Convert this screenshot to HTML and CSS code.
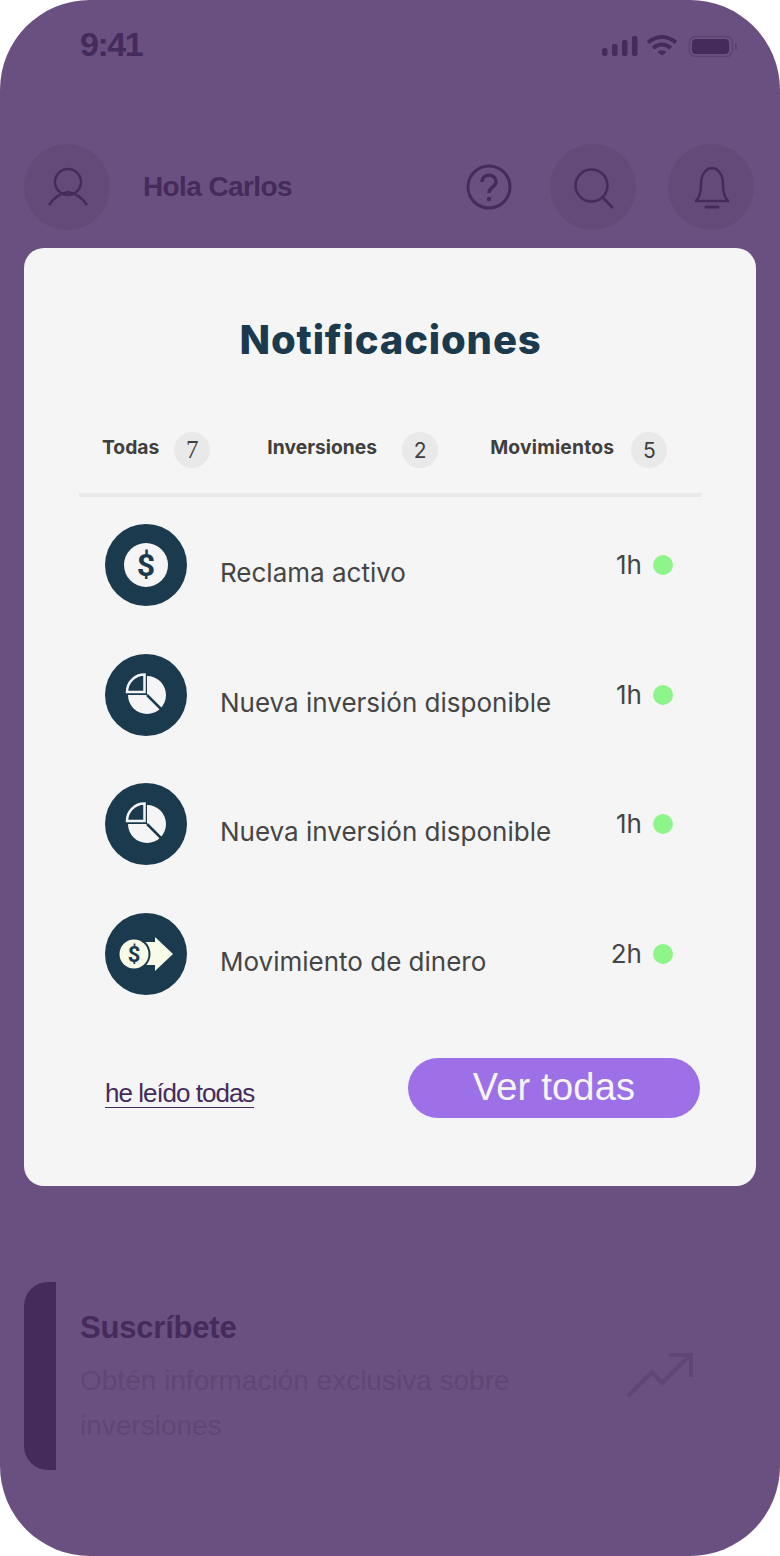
FILE: index.html
```html
<!DOCTYPE html>
<html lang="en">
<head>
    <meta charset="UTF-8">
    <meta name="viewport" content="width=device-width, initial-scale=1.0">
    <title>Notificaciones</title>
    <link rel="stylesheet" href="styles.css">
</head>
<body>
    <div class="phone">
        <div class="status-bar">
            <span class="clock">9:41</span>
            <div class="status-icons">
                <svg width="136" height="24" viewBox="0 0 136 24">
                    <rect x="0" y="15" width="5.5" height="8" rx="2.5" fill="#452a5c"/>
                    <rect x="10" y="11" width="5.5" height="12" rx="2" fill="#452a5c"/>
                    <rect x="20" y="7" width="5.5" height="16" rx="2" fill="#452a5c"/>
                    <rect x="30" y="3" width="5.5" height="20" rx="2" fill="#452a5c"/>
                    <path d="M46 9.5 Q60 -1.5 74 9.5" fill="none" stroke="#452a5c" stroke-width="4"/>
                    <path d="M51 15 Q60 8 69 15" fill="none" stroke="#452a5c" stroke-width="4"/>
                    <path d="M55.5 19 Q60 15.5 64.5 19 L60 22.5 Z" fill="#452a5c"/>
                    <rect x="87.5" y="3.5" width="43" height="20" rx="6" fill="none" stroke="#5c4372" stroke-width="1.5"/>
                    <rect x="90" y="6" width="37" height="15" rx="4" fill="#452a5c"/>
                    <rect x="133" y="10" width="2" height="7" rx="1" fill="#5c4372"/>
                </svg>
            </div>
        </div>

        <div class="top-bar">
            <div class="round-btn">
                <svg width="46" height="46" viewBox="0 0 46 46" fill="none" stroke="#452a5c" stroke-width="2.5">
                    <ellipse cx="24" cy="18" rx="13" ry="13"/>
                    <path d="M5 41 Q12 30 24 28 Q36 30 43 41"/>
                </svg>
            </div>
            <span class="greeting">Hola Carlos</span>
            <div class="top-actions">
                <svg class="help-icon" width="46" height="46" viewBox="0 0 46 46" fill="none" stroke="#452a5c" stroke-width="3">
                    <circle cx="23" cy="23" r="21"/>
                    <path d="M16 18 C16 9 30 9 30 18 C30 23 23 23 23 29" stroke-width="3.5"/>
                    <circle cx="23" cy="35" r="2.2" fill="#452a5c" stroke="none"/>
                </svg>
                <div class="round-btn">
                    <svg width="46" height="46" viewBox="0 0 46 46" fill="none" stroke="#452a5c" stroke-width="2.5">
                        <circle cx="21.5" cy="21.5" r="16"/>
                        <path d="M32 33 L43 44"/>
                    </svg>
                </div>
                <div class="round-btn">
                    <svg width="46" height="46" viewBox="0 0 46 46" fill="none" stroke="#452a5c" stroke-width="2.5">
                        <path d="M8 37 C12 33 13 28 13 20 C13 -1 35 -1 35 20 C35 28 36 33 40 37 Z" stroke-linejoin="round"/>
                        <path d="M18 43 H30" stroke-linecap="round" stroke-width="3"/>
                    </svg>
                </div>
            </div>
        </div>

        <div class="subscribe-card">
            <div class="subscribe-bar"></div>
            <div class="subscribe-text">
                <h3>Suscríbete</h3>
                <p>Obtén información exclusiva sobre inversiones</p>
            </div>
            <svg class="trend-icon" width="68" height="46" viewBox="0 0 68 46" fill="none" stroke="#5f4676" stroke-width="4">
                <path d="M2 44 L26 20 L36 31 L63 4"/>
                <path d="M43 3 H65 V25"/>
            </svg>
        </div>

        <div class="modal">
            <h1>Notificaciones</h1>

            <div class="tabs">
                <div class="tab tab-todas"><span>Todas</span><b class="badge badge-first">7</b></div>
                <div class="tab tab-inv"><span>Inversiones</span><b class="badge">2</b></div>
                <div class="tab tab-mov"><span>Movimientos</span><b class="badge">5</b></div>
            </div>

            <div class="list">
                <div class="row">
                    <svg class="row-icon" width="82" height="82" viewBox="0 0 82 82">
                        <circle cx="41" cy="41" r="41" fill="#1b3a4e"/>
                        <circle cx="41" cy="41" r="22" fill="#f5f5f5"/>
                        <text x="41" y="52" text-anchor="middle" class="dollar-big">$</text>
                    </svg>
                    <span class="row-text">Reclama activo</span>
                    <span class="row-time">1h</span>
                    <i class="dot"></i>
                </div>
                <div class="row">
                    <svg class="row-icon" width="82" height="82" viewBox="0 0 82 82">
                        <circle cx="41" cy="41" r="41" fill="#1b3a4e"/>
                        <path d="M42 22 A19 19 0 1 1 23 41 H42 Z" fill="#f5f5f5"/>
                        <path d="M42 41 L57 56" stroke="#1b3a4e" stroke-width="2.5"/>
                        <path d="M39.5 38 H22 A17.5 17.5 0 0 1 39.5 20.5 Z" fill="#1b3a4e" stroke="#f5f5f5" stroke-width="2.5"/>
                    </svg>
                    <span class="row-text">Nueva inversión disponible</span>
                    <span class="row-time">1h</span>
                    <i class="dot"></i>
                </div>
                <div class="row">
                    <svg class="row-icon" width="82" height="82" viewBox="0 0 82 82">
                        <circle cx="41" cy="41" r="41" fill="#1b3a4e"/>
                        <path d="M42 22 A19 19 0 1 1 23 41 H42 Z" fill="#f5f5f5"/>
                        <path d="M42 41 L57 56" stroke="#1b3a4e" stroke-width="2.5"/>
                        <path d="M39.5 38 H22 A17.5 17.5 0 0 1 39.5 20.5 Z" fill="#1b3a4e" stroke="#f5f5f5" stroke-width="2.5"/>
                    </svg>
                    <span class="row-text">Nueva inversión disponible</span>
                    <span class="row-time">1h</span>
                    <i class="dot"></i>
                </div>
                <div class="row">
                    <svg class="row-icon" width="82" height="82" viewBox="0 0 82 82">
                        <circle cx="41" cy="41" r="41" fill="#1b3a4e"/>
                        <path d="M38 29 H50 V24 L68 41 L50 58 V52 H38 Z" fill="#f8fbe8"/>
                        <circle cx="29" cy="41" r="16.5" fill="#1b3a4e"/>
                        <circle cx="29" cy="41" r="14.5" fill="#f8fbe8"/>
                        <text x="29" y="49" text-anchor="middle" class="dollar-small">$</text>
                    </svg>
                    <span class="row-text">Movimiento de dinero</span>
                    <span class="row-time">2h</span>
                    <i class="dot"></i>
                </div>
            </div>

            <div class="modal-footer">
                <a class="read-link">he leído todas</a>
                <button class="see-all">Ver todas</button>
            </div>
        </div>
    </div>
</body>
</html>
```

FILE: styles.css
```css
body {
    margin: 0;
    background-color: #fff;
    font-family: "Liberation Sans", Arial, sans-serif;
}
.phone {
    position: relative;
    width: 780px;
    height: 1556px;
    border-radius: 90px;
    background-color: #6a5080;
    overflow: hidden;
    color: #452a5c;
}
.status-bar {
    display: flex;
    justify-content: space-between;
    align-items: center;
    height: 88px;
    padding: 0 42px 0 80px;
}
.clock {
    font-size: 34px;
    font-weight: bold;
    letter-spacing: -1.5px;
}
.status-icons {
    display: flex;
    align-items: center;
    height: 24px;
    margin-top: 2px;
}
.top-bar {
    display: flex;
    align-items: center;
    margin-top: 56px;
    padding: 0 26px 0 24px;
    height: 86px;
}
.round-btn {
    display: flex;
    align-items: center;
    justify-content: center;
    width: 86px;
    height: 86px;
    border-radius: 50%;
    background-color: #644a79;
}
.greeting {
    margin-left: 33px;
    font-size: 28px;
    font-weight: bold;
    letter-spacing: -0.6px;
}
.top-actions {
    display: flex;
    align-items: center;
    gap: 32px;
    margin-left: auto;
}
.help-icon {
    margin-right: 6px;
}
.subscribe-card {
    display: flex;
    height: 188px;
    margin: 1052px 0 0 24px;
    width: 680px;
}
.subscribe-bar {
    width: 32px;
    background-color: #452a5c;
    border-radius: 24px 0 0 24px;
}
.subscribe-text {
    width: 470px;
    margin-left: 24px;
    padding-top: 27px;
}
.subscribe-text h3 {
    margin: 0 0 11px;
    font-size: 31px;
    line-height: 38px;
    letter-spacing: -0.2px;
}
.subscribe-text p {
    margin: 0;
    font-size: 28px;
    line-height: 45px;
    color: #5f4676;
}
.trend-icon {
    margin: 70px 0 0 76px;
}
.modal {
    position: absolute;
    left: 24px;
    top: 248px;
    width: 732px;
    height: 938px;
    box-sizing: border-box;
    padding: 0 54px 0 55px;
    background-color: #f5f5f5;
    border-radius: 20px;
}
h1 {
    margin: 0;
    padding-top: 66px;
    font-family: Inter, sans-serif;
    font-size: 40px;
    font-weight: 800;
    line-height: 52px;
    letter-spacing: 0.85px;
    text-align: center;
    color: #1b3a4e;
}
.tabs {
    display: flex;
    align-items: center;
    padding: 66px 0 25px 23px;
    border-bottom: 4px solid #e9e9e9;
    color: #3f3f3f;
}
.tab {
    display: flex;
    align-items: center;
    font-family: Inter, sans-serif;
    font-size: 19.3px;
    font-weight: 700;
}
.tab span {
    margin-top: -6px;
}
.tab-todas {
    gap: 15px;
}
.tab-inv {
    gap: 25px;
    margin-left: 57px;
}
.tab-mov {
    gap: 17px;
    margin-left: 52px;
    letter-spacing: 0.2px;
}
.badge {
    display: flex;
    align-items: center;
    justify-content: center;
    width: 36px;
    height: 36px;
    border-radius: 50%;
    background-color: #e9e9e9;
    font-size: 21px;
    font-weight: 400;
}
.badge-first {
    font-family: "Liberation Serif", serif;
    font-size: 25px;
}
.list {
    display: flex;
    flex-direction: column;
    gap: 47.6px;
    padding: 27px 0 0 26px;
}
.row {
    display: flex;
    align-items: flex-start;
    height: 82px;
    font-family: Inter, sans-serif;
    color: #454545;
}
.row-icon {
    flex: none;
}
.row-text {
    margin: 31px 0 0 33px;
    font-size: 26px;
    line-height: 36px;
}
.row-time {
    margin: 23px 0 0 auto;
    font-size: 26px;
    line-height: 36px;
}
.dot {
    width: 20px;
    height: 20px;
    margin: 31px 29px 0 11px;
    border-radius: 50%;
    background-color: #8ef58a;
}
.dollar-big {
    font-family: Roboto, sans-serif;
    font-size: 32px;
    font-weight: 700;
    fill: #1b3a4e;
}
.dollar-small {
    font-family: Roboto, sans-serif;
    font-size: 22px;
    font-weight: 700;
    fill: #1b3a4e;
}
.modal-footer {
    display: flex;
    justify-content: space-between;
    align-items: flex-start;
    margin-top: 63px;
    padding: 0 2px 0 26px;
}
.read-link {
    margin-top: 21px;
    font-size: 26px;
    line-height: 28px;
    letter-spacing: -1px;
    color: #452a5c;
    border-bottom: 1.5px solid #452a5c;
}
.see-all {
    width: 292px;
    height: 60px;
    border: none;
    border-radius: 30px;
    background-color: #9d70e8;
    color: #f5f5f5;
    font-family: "Liberation Sans", Arial, sans-serif;
    font-size: 38px;
    letter-spacing: 0.2px;
}
```
